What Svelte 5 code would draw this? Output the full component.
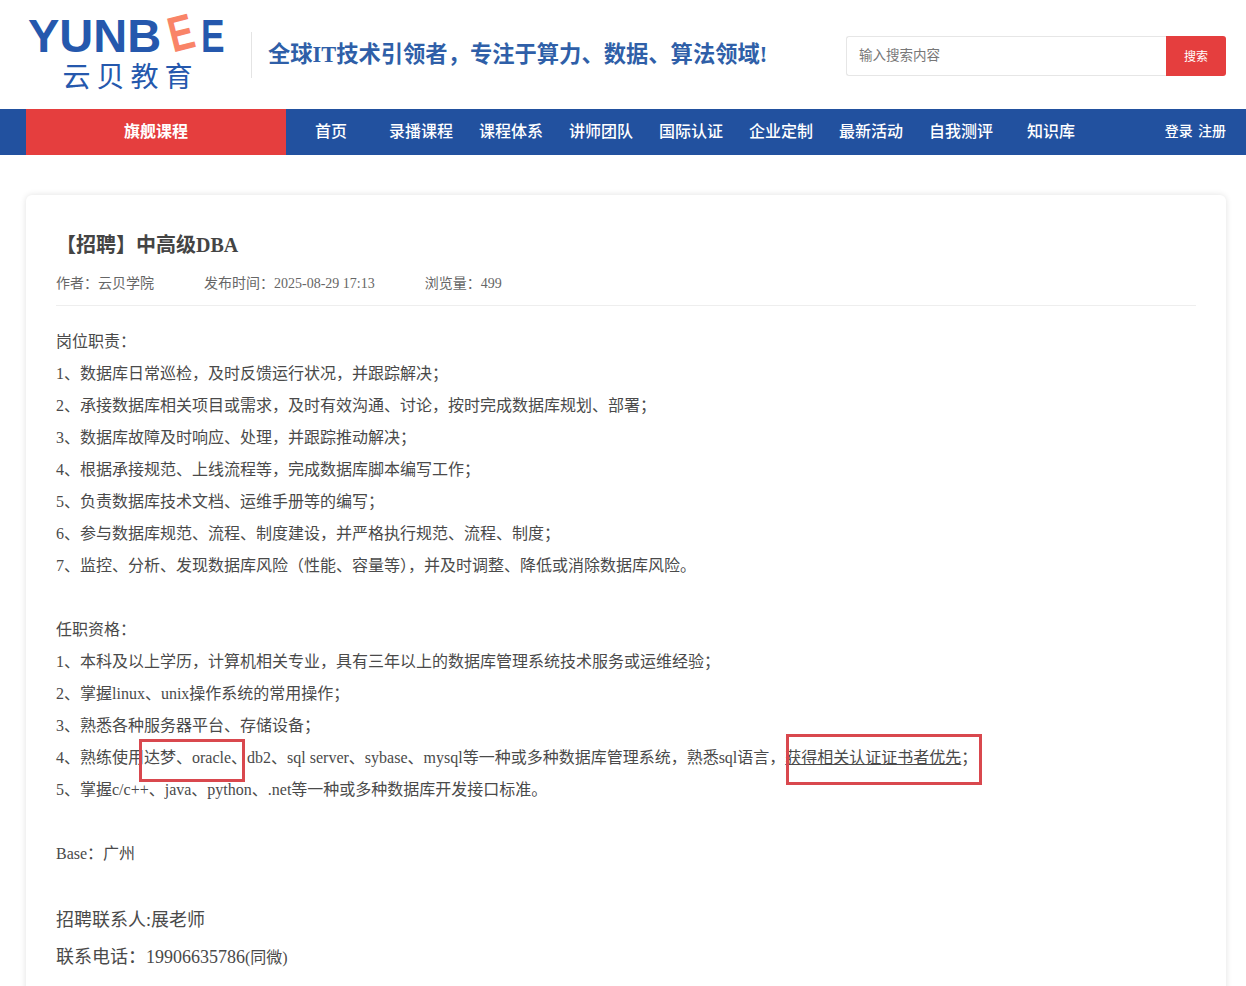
<script>
  const navItems = ['首页', '录播课程', '课程体系', '讲师团队', '国际认证', '企业定制', '最新活动', '自我测评', '知识库'];
  const duties = [
    '1、数据库日常巡检，及时反馈运行状况，并跟踪解决；',
    '2、承接数据库相关项目或需求，及时有效沟通、讨论，按时完成数据库规划、部署；',
    '3、数据库故障及时响应、处理，并跟踪推动解决；',
    '4、根据承接规范、上线流程等，完成数据库脚本编写工作；',
    '5、负责数据库技术文档、运维手册等的编写；',
    '6、参与数据库规范、流程、制度建设，并严格执行规范、流程、制度；',
    '7、监控、分析、发现数据库风险（性能、容量等），并及时调整、降低或消除数据库风险。'
  ];
</script>

<div class="page">
  <header class="top">
    <div class="logo">
      <div class="logo-en">YUNB<span class="letter tilt">E</span><span class="letter last">E</span></div>
      <div class="logo-cn">云贝教育</div>
    </div>
    <div class="divider"></div>
    <div class="slogan">全球IT技术引领者，专注于算力、数据、算法领域!</div>
    <div class="search">
      <div class="search-input">输入搜索内容</div>
      <div class="search-btn">搜索</div>
    </div>
  </header>

  <nav class="nav">
    <div class="nav-main">旗舰课程</div>
    {#each navItems as item}
      <div class="nav-item">{item}</div>
    {/each}
    <div class="nav-user"><span>登录</span> <span>注册</span></div>
  </nav>

  <main class="card">
    <h1>【招聘】中高级DBA</h1>
    <div class="meta">
      <span>作者：云贝学院</span>
      <span>发布时间：2025-08-29 17:13</span>
      <span>浏览量：499</span>
    </div>
    <article class="content">
      <p>岗位职责：</p>
      {#each duties as line}
        <p>{line}</p>
      {/each}
      <p class="blank"></p>
      <p>任职资格：</p>
      <p>1、本科及以上学历，计算机相关专业，具有三年以上的数据库管理系统技术服务或运维经验；</p>
      <p>2、掌握linux、unix操作系统的常用操作；</p>
      <p>3、熟悉各种服务器平台、存储设备；</p>
      <p>4、熟练使用<span class="mark mark-a">达梦、oracle、</span>db2、sql server、sybase、mysql等一种或多种数据库管理系统，熟悉sql语言，<span class="mark mark-b"><u>获得相关认证证书者优先</u></span>；</p>
      <p>5、掌握c/c++、java、python、.net等一种或多种数据库开发接口标准。</p>
      <p class="blank"></p>
      <p>Base：广州</p>
      <p class="blank"></p>
      <p class="big">招聘联系人:展老师</p>
      <p class="big">联系电话：19906635786<span class="small">(同微)</span></p>
    </article>
  </main>
</div>

<style>
  :global(body) {
    margin: 0;
    background: #fff;
  }

  .page {
    height: 986px;
    overflow: hidden;
    font-family: "Liberation Serif", "Noto Sans CJK SC", serif;
    color: #4a4a4a;
  }

  .top {
    height: 109px;
    display: flex;
    align-items: center;
    padding: 0 20px 0 28px;
    box-sizing: border-box;
  }

  .logo {
    width: 197px;
    font-family: "Liberation Sans", "Noto Sans CJK SC", sans-serif;
    color: #2558ad;
    display: flex;
    flex-direction: column;
    align-items: center;
    margin-top: 4px;
  }

  .logo-en {
    width: 197px;
    font-size: 47px;
    font-weight: 700;
    line-height: 40px;
    white-space: nowrap;
    display: flex;
  }

  .letter {
    display: block;
    width: 22px;
    transform-origin: left center;
  }

  .tilt {
    color: #f98468;
    margin-left: 8px;
    transform: rotate(-14deg) scaleX(0.8) scaleY(1.06);
  }

  .last {
    margin-left: 10px;
    transform: scaleX(0.75);
  }

  .logo-cn {
    font-size: 28px;
    line-height: 38px;
    letter-spacing: 6px;
    margin: 3px 0 0 8px;
    white-space: nowrap;
  }

  .divider {
    width: 1px;
    height: 46px;
    background: #e4e4e4;
    margin: 0 16px 0 26px;
  }

  .slogan {
    width: 578px;
    font-family: "Liberation Serif", "Noto Sans CJK SC", serif;
    font-size: 22.3px;
    font-weight: 700;
    color: #2f5fa8;
    white-space: nowrap;
    margin-top: -6px;
  }

  .search {
    width: 380px;
    height: 40px;
    display: flex;
    font-family: "Noto Sans CJK SC", sans-serif;
    margin-top: 2px;
  }

  .search-input {
    flex: 1;
    border: 1px solid #e6e6e6;
    border-right: 0;
    border-radius: 3px 0 0 3px;
    padding-left: 12px;
    font-size: 13.5px;
    line-height: 35px;
    color: #777;
  }

  .search-btn {
    width: 60px;
    background: #e53e3e;
    color: #fff;
    font-size: 12px;
    line-height: 39px;
    text-align: center;
    border-radius: 0 3px 3px 0;
  }

  .nav {
    height: 46px;
    background: #22519f;
    display: flex;
    align-items: center;
    padding: 0 20px 0 26px;
    color: #fff;
    font-family: "Noto Sans CJK SC", sans-serif;
    font-size: 16px;
    font-weight: 500;
  }

  .nav-main {
    width: 260px;
    height: 46px;
    line-height: 43px;
    background: #e53e3e;
    font-weight: 700;
    text-align: center;
  }

  .nav-item {
    width: 90px;
    text-align: center;
    line-height: 42px;
    margin-bottom: 4px;
    white-space: nowrap;
  }

  .nav-user {
    margin: 0 0 4px auto;
    font-size: 14px;
    line-height: 42px;
    word-spacing: 2px;
    white-space: nowrap;
  }

  .card {
    margin: 40px 20px 0 26px;
    padding: 30px 30px 40px;
    min-height: 900px;
    background: #fff;
    border-radius: 6px;
    box-shadow: 0 0 6px rgba(0, 0, 0, 0.12);
  }

  h1 {
    margin: 0;
    font-size: 20px;
    line-height: 40px;
    font-weight: 700;
    color: #444;
  }

  .meta {
    display: flex;
    gap: 50px;
    font-size: 14px;
    line-height: 20px;
    margin-top: 9px;
    padding-bottom: 11px;
    border-bottom: 1px solid #eee;
    color: #666;
  }

  .content {
    padding-top: 20px;
    font-size: 16px;
    line-height: 32px;
  }

  p {
    margin: 0;
    white-space: nowrap;
  }

  .blank {
    height: 32px;
  }

  .big {
    font-size: 18px;
    line-height: 37px;
  }

  .small {
    font-size: 16px;
  }

  .mark {
    position: relative;
  }

  .mark::after {
    content: "";
    position: absolute;
    border: 3px solid #d9484e;
    box-sizing: border-box;
  }

  .mark-a::after {
    left: -5px;
    right: 2px;
    top: -10px;
    bottom: -16px;
  }

  .mark-b::after {
    left: 1px;
    right: -21px;
    top: -15px;
    bottom: -19px;
  }
</style>
